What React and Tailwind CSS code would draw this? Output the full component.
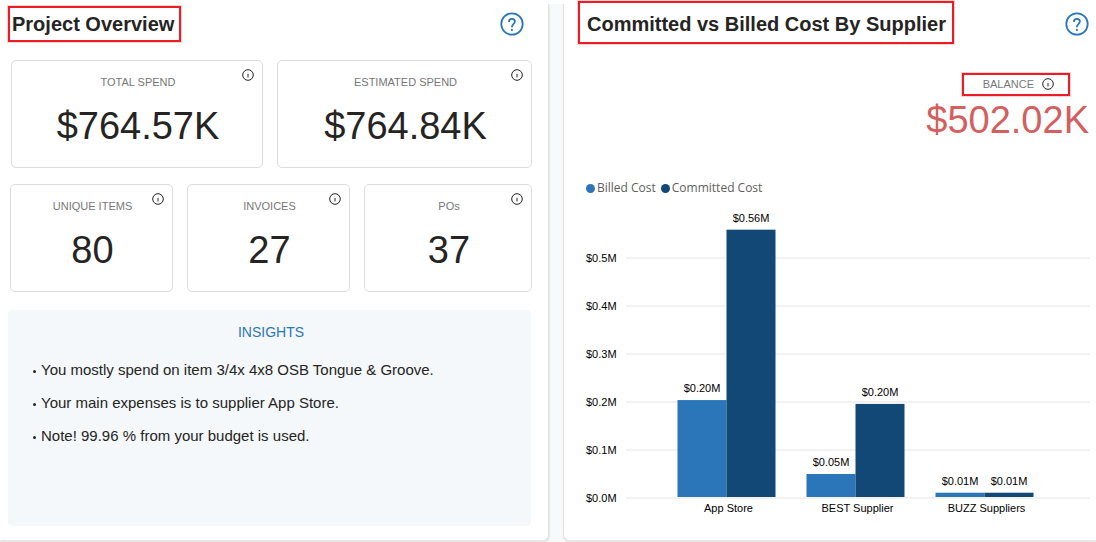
import React from "react";

const suppliers = [
  { name: "App Store", billed: 0.204, committed: 0.559 },
  { name: "BEST Supplier", billed: 0.05, committed: 0.196 },
  { name: "BUZZ Suppliers", billed: 0.011, committed: 0.011 },
];

const ticks = [0, 0.1, 0.2, 0.3, 0.4, 0.5];

function InfoIcon({ className = "" }) {
  return (
    <svg viewBox="0 0 12 12" className={`size-3 ${className}`} fill="none" stroke="#252423" aria-hidden="true">
      <circle cx="6" cy="6" r="5.3" strokeWidth="1" />
      <path d="M6 5v3.4" strokeWidth="1" />
      <path d="M6 3.6v.7" strokeWidth="1" stroke="#aaa" />
    </svg>
  );
}

function HelpButton() {
  return (
    <button type="button" aria-label="Help" className="size-6 shrink-0">
      <svg viewBox="0 0 24 24" className="size-6" fill="none" stroke="#2b76b8">
        <circle cx="12" cy="12" r="10.7" strokeWidth="1.8" />
        <path
          d="M8.9 9.9c0-1.9 1.2-3 3-3s3 1.1 3 2.7c0 1.2-.7 1.8-1.5 2.5-.9.8-1.5 1.5-1.5 3.1"
          strokeWidth="1.8"
        />
        <path d="M11.9 16.9v2" strokeWidth="1.9" />
      </svg>
    </button>
  );
}

function Highlight({ className }) {
  return (
    <span
      aria-hidden="true"
      className={`pointer-events-none absolute border-2 border-[#ed1c24] ring-1 ring-[#ed1c24]/20 ${className}`}
    />
  );
}

function StatCard({ label, value }) {
  return (
    <div className="relative rounded-[5px] border border-[#dcdcdc] pt-[13px] pb-[21px] pl-[2px] text-center">
      <InfoIcon className="absolute top-2 right-2" />
      <h3 className="text-[11px] leading-4 text-[#777777]">{label}</h3>
      <p className="mt-4 text-[38px] leading-10 text-[#252423]">{value}</p>
    </div>
  );
}

function CostChart() {
  const baseline = 302;
  const unit = 480;
  const barWidth = 49;
  const y = (v) => baseline - v * unit;
  return (
    <svg viewBox="0 0 516 344" className="block w-full" fontSize="11" role="img" aria-label="Committed and billed cost by supplier">
      {ticks.map((t) => (
        <g key={t}>
          <path d={`M46 ${y(t)}H510`} stroke="#f2f2f2" strokeWidth="2" />
          <text x="6" y={y(t) + 4} fill="#000">{`$${t.toFixed(1)}M`}</text>
        </g>
      ))}
      {suppliers.map((s, i) => {
        const mid = 146.5 + i * 129;
        return (
          <g key={s.name} textAnchor="middle" fill="#000">
            <rect x={mid - barWidth} y={y(s.billed)} width={barWidth} height={s.billed * unit - 1} fill="#2b76b8" />
            <rect x={mid} y={y(s.committed)} width={barWidth} height={s.committed * unit - 1} fill="#124875" />
            <text x={mid - barWidth / 2} y={y(s.billed) - 8}>{`$${s.billed.toFixed(2)}M`}</text>
            <text x={mid + barWidth / 2} y={y(s.committed) - 8}>{`$${s.committed.toFixed(2)}M`}</text>
            <text x={mid + 2} y={baseline + 14}>{s.name}</text>
          </g>
        );
      })}
    </svg>
  );
}

const insights = [
  "You mostly spend on item 3/4x 4x8 OSB Tongue & Groove.",
  "Your main expenses is to supplier App Store.",
  "Note! 99.96 % from your budget is used.",
];

export default function App() {
  return (
    <main className="border-t-4 border-white bg-[#f8f9fb] pb-[2px] font-['Liberation_Sans',Arial,sans-serif] text-[#252423]">
      <div className="grid grid-cols-[549fr_533fr] gap-x-[14px]">
        <section className="rounded-br-md border-r border-b border-[#e2e2e2] bg-white pb-[13px] shadow-[1px_1px_1px_#e6e6e6]">
          <header className="flex h-10 items-center justify-between pr-6 pl-3">
            <h2 className="relative text-xl leading-6 font-bold">
              Project Overview
              <Highlight className="-inset-y-[6px] -right-[7px] -left-1" />
            </h2>
            <HelpButton />
          </header>
          <div className="mt-4 mr-4 ml-[11px] grid grid-cols-[252fr_255fr] gap-[14px]">
            <StatCard label="TOTAL SPEND" value="$764.57K" />
            <StatCard label="ESTIMATED SPEND" value="$764.84K" />
          </div>
          <div className="mt-4 mr-4 ml-[10px] grid grid-cols-[163fr_163fr_168fr] gap-[14px]">
            <StatCard label="UNIQUE ITEMS" value="80" />
            <StatCard label="INVOICES" value="27" />
            <StatCard label="POs" value="37" />
          </div>
          <div className="mt-[18px] mr-[17px] ml-2 min-h-[216px] rounded bg-[#f4f8fb] pt-3 pb-4">
            <h3 className="pl-[3px] text-center text-sm leading-5 text-[#2b76b8]">INSIGHTS</h3>
            <ul className="mt-[11px] pl-[25px] text-[15px] leading-[33px]">
              {insights.map((text) => (
                <li key={text} className="flex items-center gap-[5px]">
                  <span className="mt-1 size-[3px] rounded-full bg-[#252423]" />
                  {text}
                </li>
              ))}
            </ul>
          </div>
        </section>

        <section className="rounded-bl-md border-b border-l border-[#e2e2e2] bg-white shadow-[0_1px_1px_#e6e6e6]">
          <header className="flex h-10 items-center justify-between pr-[7px] pl-[23px]">
            <h2 className="relative text-xl leading-6 font-bold">
              Committed vs Billed Cost By Supplier
              <Highlight className="-top-[11px] -right-2 -bottom-2 -left-[9px]" />
            </h2>
            <HelpButton />
          </header>
          <div className="mt-[29px] flex flex-col items-end pr-[7px]">
            <div className="mr-[19px] flex items-center gap-2 border-2 border-[#ed1c24] pt-px pr-[14px] pb-[2px] pl-[19px] ring-1 ring-[#ed1c24]/20">
              <h3 className="text-[11px] leading-4 text-[#777777]">BALANCE</h3>
              <InfoIcon />
            </div>
            <p className="mt-1 text-[38px] leading-10 text-[#d45f60]">$502.02K</p>
          </div>
          <ul className="mt-10 flex gap-[5px] pl-[22px] font-['Open_Sans','Noto_Sans',sans-serif] text-xs leading-4 text-[#605e5c]">
            <li className="flex items-center gap-[2px]">
              <span className="size-[9px] rounded-full bg-[#2b76b8]" />
              Billed Cost
            </li>
            <li className="flex items-center gap-[2px]">
              <span className="size-[9px] rounded-full bg-[#124875]" />
              Committed Cost
            </li>
          </ul>
          <div className="pl-4">
            <CostChart />
          </div>
        </section>
      </div>
    </main>
  );
}
